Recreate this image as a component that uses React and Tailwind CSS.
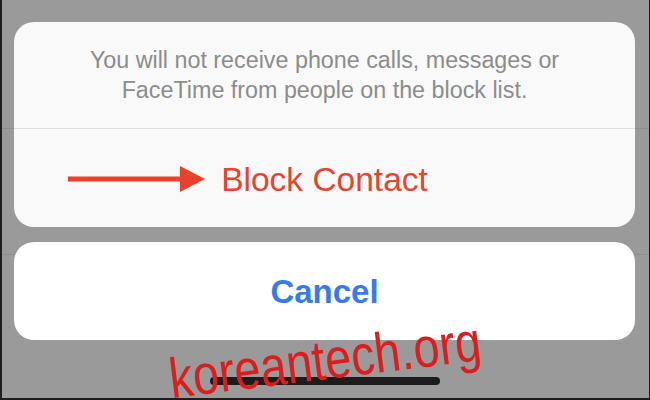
import React from "react";

export default function App() {
  return (
    <div
      className="relative w-[650px] h-[400px] overflow-hidden bg-[#9a9a9a] border-l-2 border-r border-b-2 border-[#1e1e1e]"
      style={{ fontFamily: '"Liberation Sans", Arial, sans-serif' }}
    >
      {/* underlying list separators */}
      <div className="absolute left-0 right-0 top-[128px] h-px bg-[#8e8e8e]" />
      <div className="absolute left-0 right-0 top-[254px] h-px bg-[#8e8e8e]" />

      <div className="relative flex flex-col pl-[12px] pr-[14px] pt-[22px]">
        {/* Action sheet group */}
        <div className="flex flex-col rounded-[20px] bg-[#f9f9f9] overflow-hidden">
          <div className="h-[106px] flex items-start justify-center pt-[23px]">
            <p className="text-[23.3px] leading-[30px] text-[#8c8c8c] text-center">
              You will not receive phone calls, messages or
              <br />
              FaceTime from people on the block list.
            </p>
          </div>
          <div className="h-px bg-[#dedede]" />
          <div className="h-[98px] flex items-center justify-center pt-[2px]">
            <div className="relative">
              <span className="block text-[33.5px] leading-[33px] text-[#e8432d]">
                Block Contact
              </span>
              <svg
                className="absolute right-full top-1/2 -translate-y-1/2 mr-[16px]"
                width="137"
                height="26"
                viewBox="0 0 137 26"
              >
                <rect x="0" y="10.5" width="116" height="5" fill="#e8412c" />
                <polygon points="112,0 137,13 112,26" fill="#e8412c" />
              </svg>
            </div>
          </div>
        </div>

        {/* Cancel */}
        <div className="mt-[15px] h-[98px] rounded-[20px] bg-white flex items-center justify-center">
          <span className="text-[33px] leading-[33px] font-bold text-[#3679f0]">
            Cancel
          </span>
        </div>

        {/* Home indicator */}
        <div className="mt-[37px] flex">
          <div className="ml-[196px] w-[230px] h-[8px] rounded-full bg-[#1c1c1c]" />
        </div>
      </div>

      {/* watermark */}
      <div className="absolute left-[323px] top-[360px] -translate-x-1/2 -translate-y-1/2 -rotate-[7deg]">
        <span className="block whitespace-nowrap text-[47px] leading-[46px] text-[#dd1d1d] scale-y-[1.2]">
          koreantech.org
        </span>
      </div>
    </div>
  );
}
